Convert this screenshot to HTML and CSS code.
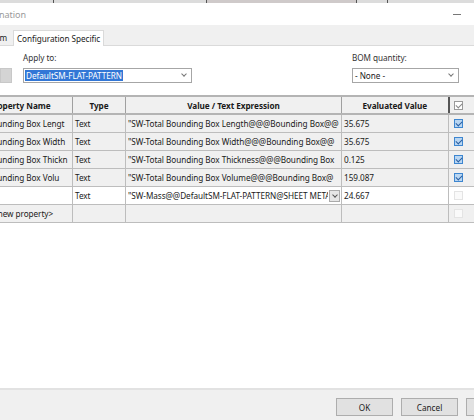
FILE: index.html
```html
<!DOCTYPE html>
<html>
<head>
	<meta charset="utf-8">
	<title>Summary Information</title>
	<link rel="stylesheet" href="styles.css">
</head>
<body>

<div class="window">
	<div class="taskbar">
		<div class="seg seg-a"></div>
		<div class="seg seg-b"></div>
		<div class="seg seg-c"></div>
		<div class="seg seg-d"></div>
		<div class="seg seg-e"></div>
	</div>

	<div class="titlebar">
		<span class="title">nation</span>
		<span class="minimize"></span>
	</div>

	<div class="tabs">
		<div class="tab tab-cut">em</div>
		<div class="tab tab-active">Configuration Specific</div>
	</div>

	<div class="content">
		<div class="form-row">
			<div class="side-button"></div>
			<div class="field field-apply">
				<label class="field-label">Apply to:</label>
				<div class="combo">
					<span class="combo-text selected">DefaultSM-FLAT-PATTERN</span>
					<span class="chevron"></span>
				</div>
			</div>
			<div class="field field-bom">
				<label class="field-label">BOM quantity:</label>
				<div class="combo">
					<span class="combo-text">- None -</span>
					<span class="chevron"></span>
				</div>
			</div>
		</div>

		<div class="grid-wrap">
			<table class="grid">
				<colgroup>
					<col class="col-name">
					<col class="col-type">
					<col class="col-value">
					<col class="col-eval">
					<col class="col-check">
				</colgroup>
				<thead>
					<tr>
						<th class="th-name">Property Name</th>
						<th>Type</th>
						<th>Value / Text Expression</th>
						<th>Evaluated Value</th>
						<th class="th-check"><span class="box box-head"></span></th>
					</tr>
				</thead>
				<tbody>
					<tr class="shaded">
						<td>Bounding Box Lengt</td>
						<td>Text</td>
						<td><span class="cell-text">"SW-Total Bounding Box Length@@@Bounding Box@@</span></td>
						<td>35.675</td>
						<td><span class="box box-on"></span></td>
					</tr>
					<tr class="shaded">
						<td>Bounding Box Width</td>
						<td>Text</td>
						<td><span class="cell-text">"SW-Total Bounding Box Width@@@Bounding Box@@</span></td>
						<td>35.675</td>
						<td><span class="box box-on"></span></td>
					</tr>
					<tr class="shaded">
						<td>Bounding Box Thickn</td>
						<td>Text</td>
						<td><span class="cell-text">"SW-Total Bounding Box Thickness@@@Bounding Box</span></td>
						<td>0.125</td>
						<td><span class="box box-on"></span></td>
					</tr>
					<tr class="shaded">
						<td>Bounding Box Volu</td>
						<td>Text</td>
						<td><span class="cell-text">"SW-Total Bounding Box Volume@@@Bounding Box@</span></td>
						<td>159.087</td>
						<td><span class="box box-on"></span></td>
					</tr>
					<tr>
						<td></td>
						<td>Text</td>
						<td class="td-edit">
							<span class="cell-text edit-text">"SW-Mass@@DefaultSM-FLAT-PATTERN@SHEET METAL.</span>
							<span class="edit-drop"></span>
						</td>
						<td>24.667</td>
						<td><span class="box box-off"></span></td>
					</tr>
					<tr class="shaded">
						<td class="td-new">&lt;new property&gt;</td>
						<td></td>
						<td></td>
						<td></td>
						<td><span class="box box-off"></span></td>
					</tr>
				</tbody>
			</table>
		</div>
	</div>

	<div class="footer">
		<button class="btn">OK</button>
		<button class="btn">Cancel</button>
		<button class="btn btn-cut">Help</button>
	</div>
</div>

</body>
</html>
```

FILE: styles.css
```css
* {
	box-sizing: border-box;
}

body {
	margin: 0;
	overflow: hidden;
	font-family: "Noto Sans", sans-serif;
	font-size: 8.2px;
	letter-spacing: -0.05px;
	color: #1a1a1a;
}

.window {
	width: 474px;
	height: 420px;
	display: flex;
	flex-direction: column;
	background: #fff;
	overflow: hidden;
}

/* thin strip of the window behind */
.taskbar {
	height: 3px;
	display: flex;
	background: #dcdcdc;
}

.seg {
	height: 3px;
	border-right: 1px solid #555;
}

.seg-a { width: 54px; }
.seg-b { width: 153px; }
.seg-c { width: 150px; background: #cfcaca; }
.seg-d { width: 31px; }
.seg-e { flex: 1; border-right: 0; }

.titlebar {
	height: 22px;
	display: flex;
	align-items: center;
	justify-content: space-between;
	padding: 0 13px 0 0;
}

.title {
	color: #9a9a9a;
	font-size: 9px;
	margin-left: -1px;
}

.minimize {
	width: 8px;
	border-top: 1px solid #777;
}

.tabs {
	height: 21px;
	background: #f0f0f0;
	border-bottom: 1px solid #dadada;
	display: flex;
	align-items: flex-end;
}

.tab {
	height: 16px;
	line-height: 15px;
	padding: 0 4px;
	margin-bottom: -1px;
	white-space: nowrap;
}

.tab-cut {
	width: 13px;
	padding: 0;
	text-indent: -5px;
	overflow: hidden;
}

.tab-active {
	background: #fff;
	border: 1px solid #dadada;
	border-bottom: 0;
	padding: 0 3px;
}

.content {
	flex: 1;
	display: flex;
	flex-direction: column;
}

.form-row {
	display: flex;
	align-items: flex-end;
	margin-top: 6px;
	height: 31px;
}

.side-button {
	width: 12px;
	height: 15px;
	background: #d4d4d4;
	border: 1px solid #c8c8c8;
}

.field {
	display: flex;
	flex-direction: column;
}

.field-apply {
	margin-left: 11px;
	width: 169px;
}

.field-bom {
	margin-left: 160px;
	width: 107px;
}

.field-label {
	height: 16px;
	line-height: 12px;
	color: #333;
}

.combo {
	height: 15px;
	border: 1px solid #a6a6a6;
	display: flex;
	align-items: center;
	justify-content: space-between;
	padding: 0 5px 0 1px;
}

.combo-text {
	line-height: 11px;
	padding: 0 1px;
}

.combo-text.selected {
	background: #3277d6;
	color: #fff;
}

.chevron {
	width: 4px;
	height: 4px;
	border-right: 1px solid #777;
	border-bottom: 1px solid #777;
	transform: rotate(45deg);
	margin-top: -3px;
}

.grid-wrap {
	margin-top: 12px;
	margin-left: -16px;
}

.grid {
	border-collapse: collapse;
	table-layout: fixed;
	width: 522px;
}

.col-name { width: 88px; }
.col-type { width: 53px; }
.col-value { width: 216px; }
.col-eval { width: 107px; }
.col-check { width: 58px; }

.grid th {
	height: 18px;
	font-weight: bold;
	background: #f0f0f0;
	border: 1px solid #a0a0a0;
	border-top: 2px solid #b4b4b4;
	border-bottom: 2px solid #b4b4b4;
	text-align: center;
	white-space: nowrap;
	overflow: hidden;
	padding: 0;
}

.grid .th-name {
	text-align: left;
	padding-left: 4px;
}

.grid .th-check {
	text-align: left;
	padding-left: 4px;
	border-left: 2px solid #555;
}

.grid td {
	height: 18px;
	border: 1px solid #bdbdbd;
	padding: 0 2px;
	white-space: nowrap;
	overflow: hidden;
}

.grid td:last-child {
	padding-left: 5px;
	border-left: 1px solid #8a8a8a;
}

.grid tr.shaded td {
	background: #f0f0f0;
}

.cell-text {
	display: block;
	overflow: hidden;
}

.td-new {
	text-indent: 6px;
}

.td-edit {
	position: relative;
}

.edit-text {
	margin-right: 11px;
}

.edit-drop {
	position: absolute;
	right: 1px;
	top: 3px;
	width: 11px;
	height: 12px;
	background: #e6e6e6;
	border: 1px solid #aaa;
}

.edit-drop::after {
	content: "";
	position: absolute;
	left: 3px;
	top: 2px;
	width: 3px;
	height: 3px;
	border-right: 1px solid #555;
	border-bottom: 1px solid #555;
	transform: rotate(45deg);
}

.box {
	display: block;
	width: 9px;
	height: 9px;
	position: relative;
}

.box-head {
	border: 1px solid #9a9a9a;
	background: #fff;
}

.box-on {
	border: 1px solid #3d86d0;
	background: #b9d6f2;
}

.box-off {
	border: 1px solid #e4e4e4;
	background: #fafafa;
}

.box-head::after,
.box-on::after {
	content: "";
	position: absolute;
	left: 2px;
	top: 0;
	width: 3px;
	height: 5px;
	border-right: 1px solid #2a5fa0;
	border-bottom: 1px solid #2a5fa0;
	transform: rotate(45deg);
}

.box-head::after {
	border-color: #888;
}

.footer {
	height: 32px;
	background: #f0f0f0;
	border-top: 2px solid #e2e2e2;
	display: flex;
	align-items: center;
	justify-content: flex-end;
	gap: 8px;
	padding-top: 4px;
}

.btn {
	width: 57px;
	height: 18px;
	background: #e1e1e1;
	border: 1px solid #adadad;
	font-family: "Noto Sans", sans-serif;
	font-size: 8.2px;
	color: #1a1a1a;
	padding: 0;
	flex-shrink: 0;
}

.btn-cut {
	margin-right: -49px;
}
```
